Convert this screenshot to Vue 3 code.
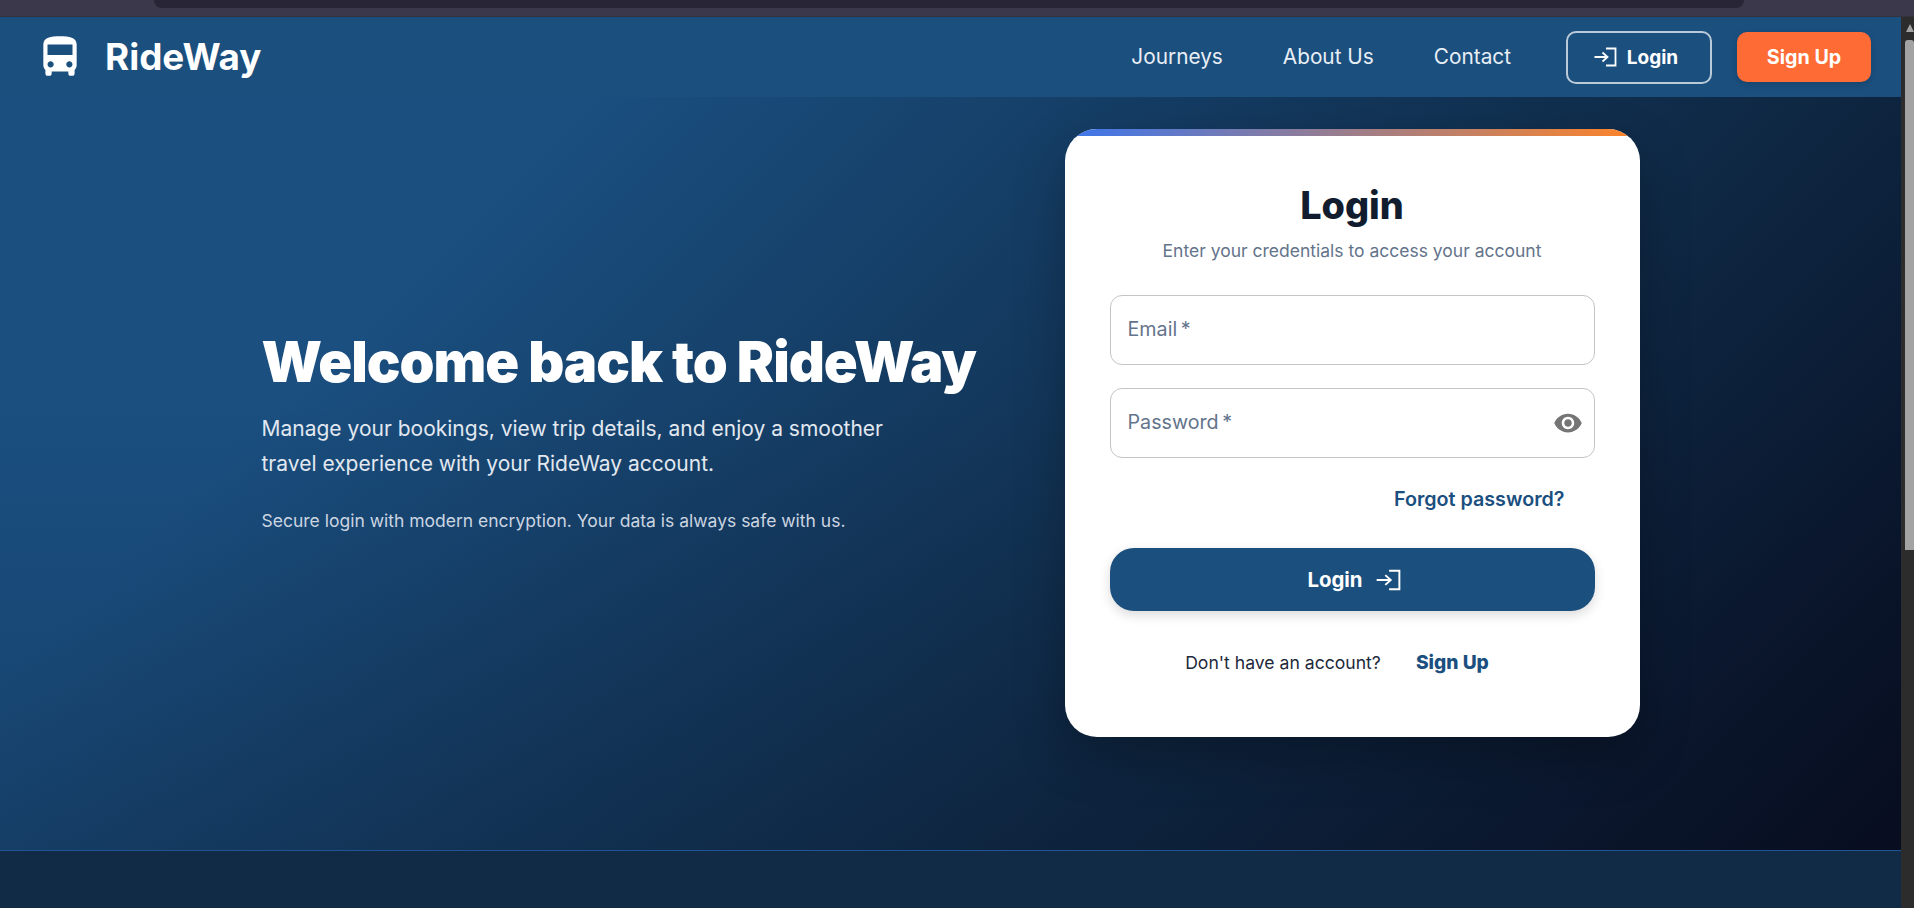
<template>
  <div class="screen">
    <div class="browser-strip"><div class="browser-tab"></div></div>
    <div class="window">
      <div class="page">
        <header class="topbar">
          <div class="brand">
            <svg class="bus-icon" viewBox="0 0 24 24"><path :d="busPath" /></svg>
            <span class="brand-name">RideWay</span>
          </div>
          <nav class="nav">
            <a v-for="link in links" :key="link" class="nav-link">{{ link }}</a>
            <button class="btn-outline">
              <svg class="login-icon" viewBox="0 0 24 24"><path :d="loginPath" /></svg>
              Login
            </button>
            <button class="btn-signup">Sign Up</button>
          </nav>
        </header>

        <main class="hero">
          <div class="hero-inner">
            <section class="intro">
              <h1>Welcome back to RideWay</h1>
              <p class="lead">Manage your bookings, view trip details, and enjoy a smoother travel experience with your RideWay account.</p>
              <p class="note">Secure login with modern encryption. Your data is always safe with us.</p>
            </section>

            <section class="card">
              <h2>Login</h2>
              <p class="subtitle">Enter your credentials to access your account</p>

              <div class="field"><span>Email&thinsp;*</span></div>
              <div class="field">
                <span>Password&thinsp;*</span>
                <svg class="eye-icon" viewBox="0 0 24 24"><path :d="eyePath" /></svg>
              </div>

              <a class="forgot">Forgot password?</a>

              <button class="btn-submit">
                Login
                <svg class="login-icon big" viewBox="0 0 24 24"><path :d="loginPath" /></svg>
              </button>

              <div class="signup-row">
                <span>Don't have an account?</span>
                <a>Sign Up</a>
              </div>
            </section>
          </div>
        </main>

        <footer class="footer"></footer>
      </div>
      <div class="scrollbar">
        <div class="scroll-arrow"></div>
        <div class="scroll-thumb"></div>
      </div>
    </div>
  </div>
</template>

<script setup>
const links = ['Journeys', 'About Us', 'Contact']

const busPath = 'M4 16c0 .88.39 1.67 1 2.22V20c0 .55.45 1 1 1h1c.55 0 1-.45 1-1v-1h8v1c0 .55.45 1 1 1h1c.55 0 1-.45 1-1v-1.78c.61-.55 1-1.34 1-2.22V6c0-3.5-3.58-4-8-4s-8 .5-8 4v10zm3.5 1c-.83 0-1.5-.67-1.5-1.5S6.67 14 7.5 14s1.5.67 1.5 1.5S8.33 17 7.5 17zm9 0c-.83 0-1.5-.67-1.5-1.5s.67-1.5 1.5-1.5 1.5.67 1.5 1.5-.67 1.5-1.5 1.5zm1.5-6H6V6h12v5z'
const loginPath = 'M1.5 12H14.5M9.5 7.5L14.5 12L9.5 16.5M13 3.5H22.5V20.5H13'
const eyePath = 'M12 4.5C7 4.5 2.73 7.61 1 12c1.73 4.39 6 7.5 11 7.5s9.27-3.11 11-7.5c-1.73-4.39-6-7.5-11-7.5zM12 17c-2.76 0-5-2.24-5-5s2.24-5 5-5 5 2.24 5 5-2.24 5-5 5zm0-8c-1.66 0-3 1.34-3 3s1.34 3 3 3 3-1.34 3-3-1.34-3-3-3z'
</script>

<style>
html, body {
  margin: 0;
  overflow: hidden;
}
</style>

<style scoped>
.screen {
  height: 908px;
  display: flex;
  flex-direction: column;
  overflow: hidden;
  font-family: Inter, "Noto Sans", sans-serif;
}

.browser-strip {
  height: 16px;
  background: #3c384c;
  border-bottom: 1px solid #35323f;
  padding: 0 170px 0 154px;
}

.browser-tab {
  height: 8px;
  background: #272536;
  border-radius: 0 0 12px 12px;
}

.window {
  flex: 1;
  display: flex;
  min-height: 0;
}

.page {
  flex: 1;
  display: flex;
  flex-direction: column;
  min-width: 0;
}

.topbar {
  height: 80px;
  flex-shrink: 0;
  display: flex;
  align-items: center;
  justify-content: space-between;
  padding: 0 30px 0 35px;
  background: #1b4f7e;
}

.brand {
  display: flex;
  align-items: center;
  gap: 20px;
}

.bus-icon {
  width: 50px;
  height: 50px;
  fill: #fff;
}

.brand-name {
  margin-top: -2px;
  font-size: 36.8px;
  font-weight: 700;
  color: #fff;
}

.nav {
  display: flex;
  align-items: center;
}

.nav-link {
  margin-top: -1px;
  font-size: 20.8px;
  color: #e8eef5;
  margin-right: 60px;
}

.nav-link:nth-child(3) {
  margin-right: 55px;
}

.btn-outline {
  width: 146px;
  height: 53px;
  display: flex;
  align-items: center;
  justify-content: center;
  gap: 10px;
  padding: 0 7px 0 0;
  margin-right: 25px;
  background: transparent;
  border: 2px solid rgba(255, 255, 255, 0.7);
  border-radius: 10px;
  color: #fff;
  font: 700 19px Inter, sans-serif;
}

.btn-signup {
  width: 134px;
  height: 50px;
  background: #ff6b35;
  border: none;
  border-radius: 10px;
  color: #fff;
  font: 700 19.7px Inter, sans-serif;
  box-shadow: 0 2px 6px rgba(0, 0, 0, 0.15);
}

.login-icon {
  width: 24px;
  height: 24px;
  fill: none;
  stroke: #fff;
  stroke-width: 1.8;
}

.login-icon.big {
  width: 26px;
  height: 26px;
}

.hero {
  height: 753px;
  flex-shrink: 0;
  box-sizing: border-box;
  padding: 32px 0 113px;
  background:
    linear-gradient(180deg, rgba(10, 20, 40, 0) 40%, rgba(10, 20, 40, 0.22) 100%),
    linear-gradient(135deg, #1a4f80 0%, #1a4f80 22%, #0f2a47 65%, #070b1d 100%);
}

.hero-inner {
  width: 1378px;
  margin: 0 auto;
  display: flex;
  align-items: center;
  justify-content: space-between;
}

.intro {
  width: 730px;
  padding-bottom: 6px;
  color: #fff;
}

.intro h1 {
  margin: 0 0 14px;
  font-size: 56px;
  font-weight: 900;
  line-height: 1.2;
  letter-spacing: -1.05px;
}

.lead {
  margin: 0 0 29px;
  max-width: 640px;
  font-size: 21px;
  line-height: 35px;
  color: #e2e8f0;
}

.note {
  margin: 0;
  font-size: 17.5px;
  color: #cbd5e1;
}

.card {
  position: relative;
  width: 575px;
  height: 608px;
  box-sizing: border-box;
  padding: 50px 45px 0;
  background: #fff;
  border-radius: 32px;
  overflow: hidden;
  display: flex;
  flex-direction: column;
  box-shadow: 0 20px 50px rgba(0, 0, 0, 0.25);
}

.card::before {
  content: "";
  position: absolute;
  top: 0;
  left: 0;
  right: 0;
  height: 7px;
  background: linear-gradient(90deg, #3b76ee, #ff8427);
}

.card h2 {
  margin: 0;
  font-size: 37.8px;
  font-weight: 800;
  line-height: 52px;
  text-align: center;
  color: #111c2e;
}

.subtitle {
  margin: 8px 0 32px;
  font-size: 17.5px;
  line-height: 24px;
  text-align: center;
  color: #64748b;
}

.field {
  height: 70px;
  flex-shrink: 0;
  box-sizing: border-box;
  display: flex;
  align-items: center;
  justify-content: space-between;
  padding: 0 11px 0 17px;
  margin-bottom: 23px;
  border: 1px solid #c4c4c4;
  border-radius: 12px;
  font-size: 19.7px;
  color: #64748b;
}

.field span {
  margin-top: -2px;
}

.eye-icon {
  width: 30px;
  height: 30px;
  fill: #757575;
}

.forgot {
  align-self: flex-end;
  margin: 6px 30px 0 0;
  font-size: 19.7px;
  font-weight: 600;
  line-height: 24px;
  color: #1a4f80;
}

.btn-submit {
  height: 63px;
  flex-shrink: 0;
  margin-top: 37px;
  display: flex;
  align-items: center;
  justify-content: center;
  gap: 12px;
  padding: 0 0 0 4px;
  background: #1b4f7e;
  border: none;
  border-radius: 24px;
  color: #fff;
  font: 700 20.4px Inter, sans-serif;
  box-shadow: 0 4px 12px rgba(0, 0, 0, 0.15);
}

.signup-row {
  margin-top: 39px;
  padding-right: 30px;
  display: flex;
  justify-content: center;
  align-items: center;
  gap: 35px;
  font-size: 17.6px;
  color: #1e293b;
}

.signup-row a {
  font-size: 19.2px;
  font-weight: 800;
  color: #1a4f80;
}

.footer {
  flex: 1;
  background: #112a45;
  border-top: 1px solid #1f5594;
}

.scrollbar {
  width: 13px;
  box-sizing: border-box;
  flex-shrink: 0;
  background: #2c2c2c;
  display: flex;
  flex-direction: column;
  align-items: center;
  padding: 7px 0 0 4px;
}

.scroll-arrow {
  width: 0;
  height: 0;
  border-left: 4px solid transparent;
  border-right: 4px solid transparent;
  border-bottom: 8px solid #a3a3a3;
}

.scroll-thumb {
  width: 9px;
  height: 510px;
  margin-top: 8px;
  background: #a3a3a3;
  border-radius: 3px 3px 0 0;
}
</style>
